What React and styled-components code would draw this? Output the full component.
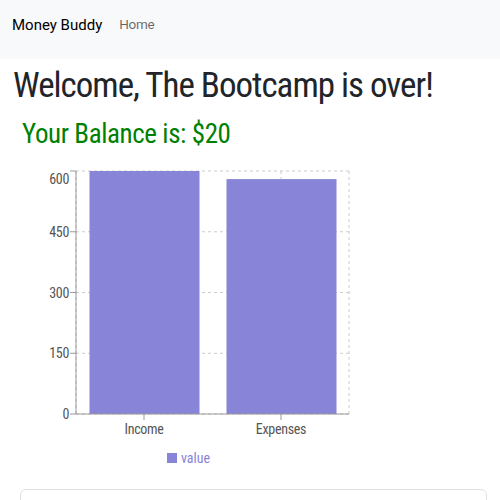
import styled, { createGlobalStyle } from 'styled-components'

const GlobalStyle = createGlobalStyle`
  body {
    margin: 0;
    background: #fff;
    font-family: 'Roboto Condensed', Roboto, 'Liberation Sans', sans-serif;
    color: #212529;
  }
`

const data = [
  { name: 'Income', value: 600 },
  { name: 'Expenses', value: 580 },
]

const Nav = styled.nav`
  height: 59px;
  background: #f8f9fa;
  display: flex;
  align-items: center;
  padding: 0 12px;
  gap: 17px;
  font-family: Roboto, 'Liberation Sans', sans-serif;
`

const Brand = styled.a`
  font-size: 15px;
  color: #000;
  text-decoration: none;
  margin-top: -10px;
`

const NavLink = styled.a`
  font-size: 13.5px;
  letter-spacing: -0.3px;
  color: rgba(0, 0, 0, 0.6);
  text-decoration: none;
  margin-top: -12px;
`

const Main = styled.main`
  padding: 0 13px;
`

const Title = styled.h1`
  font-size: 35px;
  font-weight: 400;
  margin: 4px 0 0;
  line-height: 46px;
  letter-spacing: -1px;
  white-space: nowrap;
`

const Balance = styled.h2`
  font-size: 27px;
  font-weight: 400;
  color: #008000;
  margin: 8px 0 0 9px;
  line-height: 34px;
  letter-spacing: -0.4px;
`

const ChartWrap = styled.div`
  width: 377px;
  margin-left: -13px;
  margin-top: 10px;
`

const Legend = styled.div`
  display: flex;
  justify-content: center;
  align-items: center;
  gap: 4px;
  margin-top: 2px;
  font-size: 14px;
  color: #8884d8;
`

const Swatch = styled.span`
  width: 10px;
  height: 10px;
  background: #8884d8;
`

const Card = styled.div`
  margin: 23px 0 0 7px;
  height: 60px;
  border: 1px solid #dee2e6;
  border-radius: 6px;
`

const ticks = [0, 150, 300, 450, 600]
const y = (v) => 253 - (v / 600) * 243
const centers = [144, 281]

function Chart() {
  return (
    <svg width="364" height="283" viewBox="0 0 364 283">
      <g stroke="#ccc" strokeDasharray="3 3">
        {ticks.map((t) => (
          <line key={t} x1="76" x2="349" y1={y(t)} y2={y(t)} />
        ))}
        {[76, ...centers, 349].map((x) => (
          <line key={x} x1={x} x2={x} y1="10" y2="253" />
        ))}
      </g>
      {data.map((d, i) => (
        <rect
          key={d.name}
          x={i === 0 ? 89.5 : 226.5}
          width="110"
          y={y(d.value)}
          height={253 - y(d.value)}
          fill="#8884d8"
        />
      ))}
      <g stroke="#999">
        <line x1="76" x2="76" y1="10" y2="253" />
        <line x1="76" x2="349" y1="253" y2="253" />
        {ticks.map((t) => (
          <line key={t} x1="70" x2="76" y1={y(t)} y2={y(t)} />
        ))}
        {centers.map((x) => (
          <line key={x} x1={x} x2={x} y1="253" y2="259" />
        ))}
      </g>
      <g fill="#555" fontSize="14" fontFamily="'Roboto Condensed', sans-serif" letterSpacing="-0.3">
        {ticks.map((t) => (
          <text key={t} x="69" y={t === 600 ? y(t) + 13 : y(t) + 5} textAnchor="end">
            {t}
          </text>
        ))}
        {data.map((d, i) => (
          <text key={d.name} x={centers[i]} y="273" textAnchor="middle">
            {d.name}
          </text>
        ))}
      </g>
    </svg>
  )
}

export default function App() {
  return (
    <>
      <GlobalStyle />
      <Nav>
        <Brand href="#">Money Buddy</Brand>
        <NavLink href="#">Home</NavLink>
      </Nav>
      <Main>
        <Title>Welcome, The Bootcamp is over!</Title>
        <Balance>Your Balance is: $20</Balance>
        <ChartWrap>
          <Chart />
          <Legend>
            <Swatch />
            value
          </Legend>
        </ChartWrap>
        <Card />
      </Main>
    </>
  )
}
